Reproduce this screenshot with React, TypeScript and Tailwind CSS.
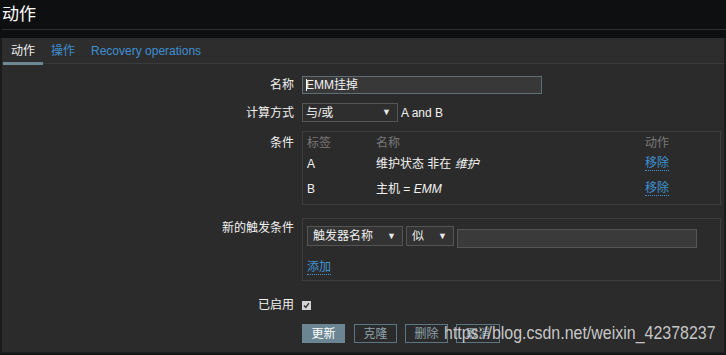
import React from "react";

const font = "font-['Liberation_Sans','Noto_Sans_CJK_SC',sans-serif]";

function Arrow() {
  return <span className="text-[9px] leading-none text-[#e8e8e8]">▼</span>;
}

function Select({ text, width }: { text: string; width: string }) {
  return (
    <div
      className={`${width} flex h-[20px] items-center justify-between border border-[#555] bg-[#333] pl-[5px] pr-[6px] text-[12px] text-[#eee]`}
    >
      <span>{text}</span>
      <Arrow />
    </div>
  );
}

function LinkDotted({ children }: { children: React.ReactNode }) {
  return (
    <span className="border-b border-dotted border-[#3f94d6] leading-[14px] text-[#3f94d6]">
      {children}
    </span>
  );
}

export default function App() {
  return (
    <div className={`${font} relative h-[355px] w-[726px] overflow-hidden bg-[#0e0f11]`}>
      {/* Title */}
      <div className="flex h-[29px] items-center pl-[2px] text-[17px] text-white">动作</div>
      <div className="ml-[2px] h-[1px] bg-[#2f3032]" />
      <div className="h-[8px]" />

      <div className="bg-[#1c1c1c] px-[2px] pb-[2px]">
        {/* Tabs */}
        <div className="flex h-[26px] border-b border-[#3a3a3a] bg-[#2d2d2d] pl-[1px] text-[12px]">
          <div className="relative flex items-center px-[8px] text-[#f0f0f0]">
            动作
            <div className="absolute bottom-[-2px] left-0 right-0 h-[3px] bg-[#6d8793]" />
          </div>
          <div className="flex items-center px-[8px] text-[#3f8fd2]">操作</div>
          <div className="flex items-center px-[8px] text-[#3f8fd2]">Recovery operations</div>
        </div>

        {/* Form panel */}
        <div className="flex h-[288px] flex-col gap-[9px] bg-[#2b2b2b] pt-[12px] text-[12px] text-[#f2f2f2]">
          {/* Name */}
          <div className="flex items-center">
            <div className="w-[292px] text-right">名称</div>
            <div className="ml-[8px] flex h-[18px] w-[240px] items-center border border-[#5f6d74] bg-[#383838] pl-[3px] text-[#f2f2f2]">
              <span className="mr-[-1px] h-[12px] w-[1px] bg-white" />
              EMM挂掉
            </div>
          </div>

          {/* Calculation */}
          <div className="flex items-center">
            <div className="w-[292px] text-right">计算方式</div>
            <div className="ml-[8px] flex items-center gap-[3px]">
              <div className="flex h-[19px] w-[96px] items-center justify-between border border-[#555] bg-[#2e2e2e] pl-[3px] pr-[6px]">
                <span>与/或</span>
                <Arrow />
              </div>
              <span>A and B</span>
            </div>
          </div>

          {/* Conditions */}
          <div className="flex items-start">
            <div className="w-[292px] pt-[3px] text-right">条件</div>
            <div className="ml-[8px] w-[419px] border border-[#3d3d3d] px-[4px] pb-[3px] pt-[2px]">
              <div className="flex h-[17px] items-center text-[#7a7a7a]">
                <div className="w-[69px]">标签</div>
                <div className="w-[269px]">名称</div>
                <div>动作</div>
              </div>
              <div className="flex h-[25px] items-center">
                <div className="w-[69px]">A</div>
                <div className="w-[269px]">
                  维护状态 非在 <span className="italic">维护</span>
                </div>
                <LinkDotted>移除</LinkDotted>
              </div>
              <div className="flex h-[25px] items-center">
                <div className="w-[69px]">B</div>
                <div className="w-[269px]">
                  主机 = <span className="italic">EMM</span>
                </div>
                <LinkDotted>移除</LinkDotted>
              </div>
            </div>
          </div>

          {/* New trigger condition */}
          <div className="mt-[4px] flex items-start">
            <div className="w-[292px] pt-[1px] text-right">新的触发条件</div>
            <div className="ml-[8px] flex h-[63px] w-[419px] flex-col border border-[#3d3d3d] pl-[4px] pt-[7px]">
              <div className="flex items-start gap-[3px]">
                <Select text="触发器名称" width="w-[96px]" />
                <Select text="似" width="w-[48px]" />
                <div className="mt-[3px] h-[19px] w-[240px] border border-[#555] bg-[#3a3a3a]" />
              </div>
              <div className="mt-[10px]">
                <LinkDotted>添加</LinkDotted>
              </div>
            </div>
          </div>

          {/* Enabled */}
          <div className="mt-[6px] flex items-center">
            <div className="w-[292px] text-right">已启用</div>
            <div className="ml-[8px] flex h-[9px] w-[9px] items-center justify-center bg-[#d4d4d4]">
              <svg width="7" height="7" viewBox="0 0 7 7">
                <path d="M1 3.5 L2.8 5.5 L6 1.2" stroke="#333" strokeWidth="1.4" fill="none" />
              </svg>
            </div>
          </div>

          {/* Buttons */}
          <div className="mt-[1px] flex pl-[300px]">
            <div className="flex h-[19px] w-[43px] items-center justify-center bg-[#6b8592] text-white">更新</div>
            <div className="ml-[9px] flex h-[19px] w-[43px] items-center justify-center border border-[#5a7584] text-[#8fa3ad]">克隆</div>
            <div className="ml-[8px] flex h-[19px] w-[43px] items-center justify-center border border-[#5a7584] text-[#8fa3ad]">删除</div>
            <div className="ml-[8px] flex h-[19px] w-[44px] items-center justify-center border border-[#5a7584] text-[#8fa3ad]">取消</div>
          </div>
        </div>
      </div>

      {/* Watermark overlay */}
      <div className="absolute left-[444px] top-[320px] origin-left scale-x-[0.84] whitespace-nowrap font-['Liberation_Sans',sans-serif] text-[19px] leading-[26px] text-[#dcdcdc]/90">
        https://blog.csdn.net/weixin_42378237
      </div>
    </div>
  );
}
